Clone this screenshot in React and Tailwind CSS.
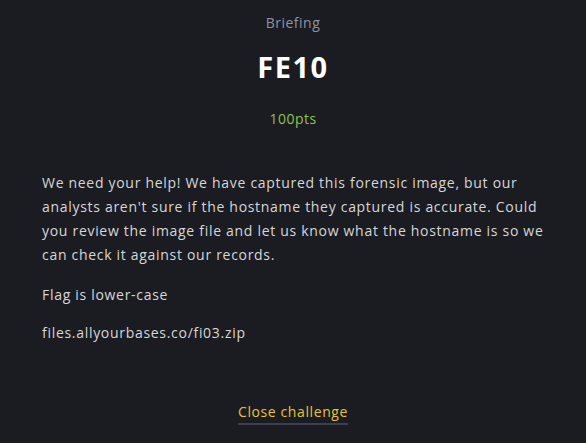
export default function App() {
  return (
    <div className="min-h-[443px] w-full bg-[#1b1c21] font-['Open_Sans','Lato',sans-serif] flex flex-col">
      {/* Header */}
      <header className="flex flex-col items-center pt-[13px]">
        <div className="text-[14px] leading-[20px] tracking-[0.5px] text-[#8c93a8]">Briefing</div>
        <h1 className="mt-[16px] text-[29px] leading-[36px] font-bold tracking-[1.5px] text-white">FE10</h1>
        <div className="mt-[24px] text-[14px] leading-[20px] tracking-[0.5px] text-[#8bc34a]">100pts</div>
      </header>

      {/* Body */}
      <div className="mt-[42px] px-[42px] text-[14px] leading-[24px] tracking-[0.7px] text-[#d6d6d8] flex flex-col gap-[14px]">
        <p className="mb-[2px]">
          We need your help! We have captured this forensic image, but our analysts aren't sure if the hostname they
          captured is accurate. Could you review the image file and let us know what the hostname is so we can check it
          against our records.
        </p>
        <p>Flag is lower-case</p>
        <p>files.allyourbases.co/fi03.zip</p>
      </div>

      {/* Footer */}
      <div className="mt-[57px] flex justify-center">
        <button className="text-[14px] leading-[20px] tracking-[0.6px] text-[#e5c334] border-b-2 border-[#3c4050] pb-[1px]">
          Close challenge
        </button>
      </div>
    </div>
  );
}
